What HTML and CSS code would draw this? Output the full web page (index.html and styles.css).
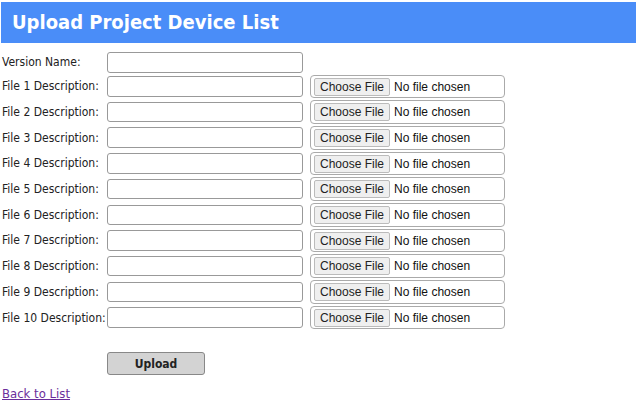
FILE: index.html
```html
<!DOCTYPE html>
<html>
<head>
<meta charset="utf-8">
<link rel="stylesheet" href="styles.css">
</head>
<body>
<h2 class="title">Upload Project Device List</h2>
<form class="form">
<table class="grid">
<tr><td class="lbl">Version Name:</td><td><input class="txt" type="text"></td><td></td></tr>
<tr><td class="lbl">File 1 Description:</td><td><input class="txt" type="text"></td><td><input class="file" type="file"></td></tr>
<tr><td class="lbl">File 2 Description:</td><td><input class="txt" type="text"></td><td><input class="file" type="file"></td></tr>
<tr><td class="lbl">File 3 Description:</td><td><input class="txt" type="text"></td><td><input class="file" type="file"></td></tr>
<tr><td class="lbl">File 4 Description:</td><td><input class="txt" type="text"></td><td><input class="file" type="file"></td></tr>
<tr><td class="lbl">File 5 Description:</td><td><input class="txt" type="text"></td><td><input class="file" type="file"></td></tr>
<tr><td class="lbl">File 6 Description:</td><td><input class="txt" type="text"></td><td><input class="file" type="file"></td></tr>
<tr><td class="lbl">File 7 Description:</td><td><input class="txt" type="text"></td><td><input class="file" type="file"></td></tr>
<tr><td class="lbl">File 8 Description:</td><td><input class="txt" type="text"></td><td><input class="file" type="file"></td></tr>
<tr><td class="lbl">File 9 Description:</td><td><input class="txt" type="text"></td><td><input class="file" type="file"></td></tr>
<tr><td class="lbl">File 10 Description:</td><td><input class="txt" type="text"></td><td><input class="file" type="file"></td></tr>
</table>
<div class="actions"><button class="btn" type="button">Upload</button></div>
</form>
<a class="back" href="#">Back to List</a>
</body>
</html>
```
FILE: styles.css
```css
html, body { margin: 0; padding: 0; background: #fff; }
body {
  padding: 2px 1px 0 1px;
  font-family: "DejaVu Sans Condensed", "DejaVu Sans", sans-serif;
  font-size: 12px;
  color: #222;
}
.title {
  margin: 0;
  height: 41px;
  line-height: 41px;
  padding-left: 11px;
  background: #4a8df8;
  color: #fff;
  font-size: 20px;
  font-weight: bold;
}
.form { margin-top: 7px; }
.grid { border-collapse: separate; border-spacing: 1px 2px; }
.grid td { padding: 0; vertical-align: middle; }
.lbl { white-space: nowrap; width: 104px; }
.txt {
  box-sizing: border-box;
  display: block;
  width: 196px;
  height: 20.5px;
  margin: 0;
  border: 1px solid #999;
  border-radius: 3px;
  padding: 1px 3px;
  font-size: 12px;
}
.file {
  box-sizing: border-box;
  display: block;
  margin-left: 6px;
  width: 195px;
  height: 23.7px;
  border: 1px solid #aaa;
  border-radius: 4px;
  padding: 2px 3px;
  font-family: "Liberation Sans", Arial, sans-serif;
  font-size: 12px;
  color: #111;
}
.file::file-selector-button {
  font-family: "Liberation Sans", Arial, sans-serif;
  font-size: 12px;
  height: 18px;
  margin: 0 4px 0 0;
  padding: 0 5px;
  border: 1px solid #bbb;
  border-radius: 2px;
  background: #efefef;
  color: #222;
}
.actions { padding: 21px 0 0 106px; }
.btn {
  width: 98px;
  height: 23px;
  border: 1px solid #888;
  border-radius: 3px;
  background: #d3d3d3;
  font-family: "DejaVu Sans Condensed", "DejaVu Sans", sans-serif;
  font-size: 12px;
  font-weight: bold;
  color: #222;
}
.back {
  display: inline-block;
  margin-top: 11px;
  margin-left: 1px;
  color: #6b2e9b;
  font-size: 13px;
}
```
